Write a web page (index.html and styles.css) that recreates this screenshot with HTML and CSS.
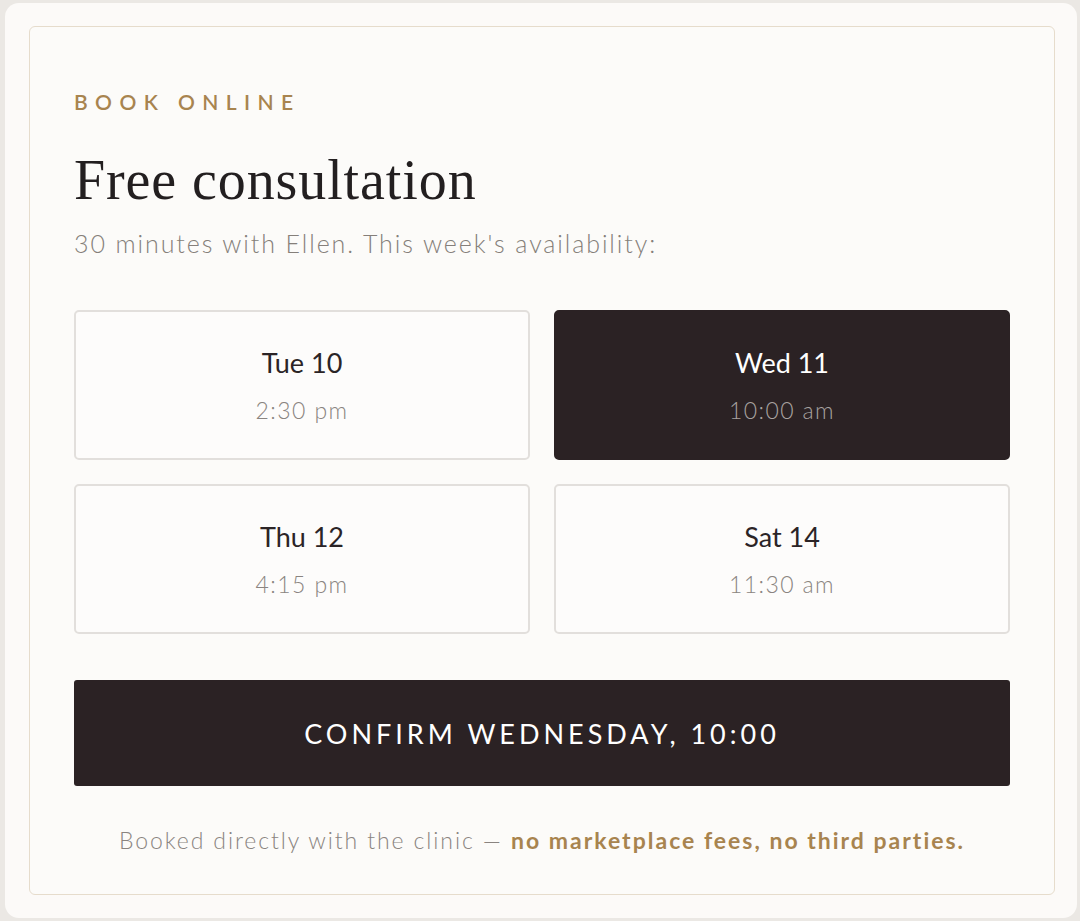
FILE: index.html
```html
<!DOCTYPE html>
<html lang="en">
<head>
<meta charset="utf-8">
<title>Book online</title>
<link rel="stylesheet" href="styles.css">
</head>
<body>
<div class="panel">
  <section class="card">
    <div class="eyebrow">BOOK ONLINE</div>
    <h1 class="title">Free consultation</h1>
    <p class="subtitle">30 minutes with Ellen. This week's availability:</p>
    <div class="slots">
      <button class="slot"><span class="day">Tue 10</span><span class="time">2:30 pm</span></button>
      <button class="slot selected"><span class="day">Wed 11</span><span class="time">10:00 am</span></button>
      <button class="slot"><span class="day">Thu 12</span><span class="time">4:15 pm</span></button>
      <button class="slot"><span class="day">Sat 14</span><span class="time">11:30 am</span></button>
    </div>
    <button class="confirm">CONFIRM WEDNESDAY, 10:00</button>
    <p class="note">Booked directly with the clinic — <strong>no marketplace fees, no third parties.</strong></p>
  </section>
</div>
</body>
</html>
```
FILE: styles.css
```css
html, body {
  margin: 0;
  height: 100%;
}
body {
  background: #ebe8e4;
  padding: 3px 3px 3px 5px;
  box-sizing: border-box;
  display: flex;
  font-family: "Lato", "Liberation Sans", sans-serif;
}
.panel {
  flex: 1;
  background: #fcfaf8;
  border-radius: 14px;
  padding: 23px 22px 23px 24px;
  display: flex;
}
.card {
  flex: 1;
  border: 1px solid #e6dccc;
  border-radius: 6px;
  padding: 63px 44px 0 44px;
  background: #fcfbf9;
}
.eyebrow {
  font-size: 21px;
  line-height: 24px;
  letter-spacing: 7.4px;
  font-weight: 600;
  color: #a8844f;
}
.title {
  margin: 37px 0 0 0;
  font-family: "Liberation Serif", serif;
  font-weight: 400;
  font-size: 56px;
  line-height: 58px;
  letter-spacing: 0.9px;
  color: #231f20;
}
.subtitle {
  margin: 17px 0 0 0;
  font-size: 25px;
  line-height: 34px;
  letter-spacing: 1.9px;
  font-weight: 300;
  color: #857f7a;
}
.slots {
  margin-top: 50px;
  display: grid;
  grid-template-columns: 1fr 1fr;
  gap: 24px;
}
.slot {
  height: 150px;
  box-sizing: border-box;
  border: 2px solid #e2dfdc;
  border-radius: 5px;
  background: #fdfcfb;
  display: flex;
  flex-direction: column;
  align-items: center;
  justify-content: center;
  gap: 17px;
  font-family: inherit;
  padding: 0;
}
.slot.selected {
  background: #2b2224;
  border-color: #2b2224;
}
.day {
  font-size: 27px;
  line-height: 32px;
  font-weight: 400;
  color: #2b2426;
}
.time {
  font-size: 23px;
  line-height: 28px;
  letter-spacing: 1.4px;
  font-weight: 300;
  color: #8a8480;
}
.selected .day { color: #ffffff; }
.selected .time { color: #a8a2a0; }
.confirm {
  display: block;
  width: 100%;
  margin-top: 46px;
  height: 106px;
  border: none;
  border-radius: 3px;
  background: #2b2224;
  color: #ffffff;
  font-family: inherit;
  font-size: 27px;
  letter-spacing: 4px;
  font-weight: 400;
}
.note {
  margin: 39px 0 0 0;
  text-align: center;
  font-size: 23px;
  line-height: 30px;
  letter-spacing: 1.9px;
  font-weight: 300;
  color: #8a8480;
}
.note strong {
  font-weight: 700;
  letter-spacing: 2px;
  color: #a8844f;
}
```
